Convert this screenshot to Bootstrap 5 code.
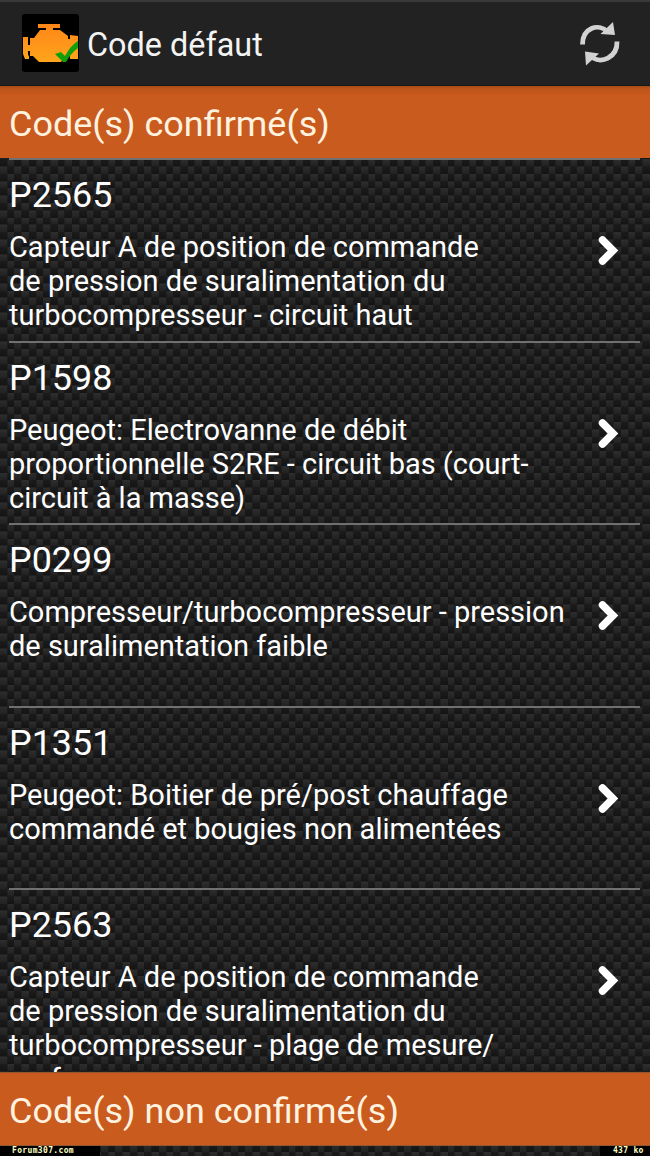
<!DOCTYPE html>
<html lang="fr" data-bs-theme="dark">
<head>
<meta charset="utf-8">
<meta name="viewport" content="width=device-width, initial-scale=1">
<title>Code défaut</title>
<link href="https://cdn.jsdelivr.net/npm/bootstrap@5.3.0/dist/css/bootstrap.min.css" rel="stylesheet">
<style>
  body { font-family: Roboto, sans-serif; color: #fff; background: #191919; }
  .screen { height: 1156px; }
  .topbar { height: 86px; background: #222; border-top: 2px solid #393939; border-bottom: 1px solid #161616; padding: 0 30px 0 22px; }
  .topbar h1 { font-size: 32.4px; line-height: 40px; color: #f3f3f3; padding-top: 2px; }
  .engine-logo { margin-bottom: 2px; }
  .section-title { height: 72px; flex: none; background: #ca5b1e; color: #fff3e0; font-size: 35.96px; line-height: 77px; padding-left: 9px; }
  .section-first { background: linear-gradient(#a94c18, #bd551b 3px, #ca5b1e 10px); }
  .carbon { background-image: url("data:image/svg+xml,%3Csvg xmlns='http://www.w3.org/2000/svg' width='14.444' height='14.6' viewBox='0 0 14 14' preserveAspectRatio='none'%3E%3Cdefs%3E%3ClinearGradient id='a' x2='0' y2='1'%3E%3Cstop stop-color='%232e2e2e'/%3E%3Cstop offset='1' stop-color='%23212121'/%3E%3C/linearGradient%3E%3ClinearGradient id='b' x2='0' y2='1'%3E%3Cstop stop-color='%231b1b1b'/%3E%3Cstop offset='1' stop-color='%23141414'/%3E%3C/linearGradient%3E%3C/defs%3E%3Cpath fill='url(%23b)' d='M0 0h7v7H0z'/%3E%3Cpath fill='url(%23a)' d='M7 0h7v7H7z'/%3E%3Cpath fill='url(%23a)' d='M0 7h7v7H0z'/%3E%3Cpath fill='url(%23b)' d='M7 7h7v7H7z'/%3E%3C/svg%3E"); background-size: 14.444px 14.6px; background-position: 0 13.3px; }
  .codes { height: 914px; flex: none; padding: 0 10px 0 9px; }
  .code-item { height: 182.5px; border-top: 2px solid #707070; padding-top: 14px; }
  .code-item h2 { font-size: 35.9px; line-height: 43px; margin: 0 0 13px; }
  .code-item p { font-size: 28.99px; line-height: 34px; margin: 0; white-space: nowrap; }
  .code-item svg { margin: 61px 21px 0 0; flex: none; }
  .foot-title { border-top: 1px solid #94562f; border-bottom: 1px solid #94562f; height: 74px; line-height: 76px; }
  .stamp { background: #000; color: #ffffc4; font: bold 8px/10px "DejaVu Sans Mono", monospace; height: 10px; }
  .stamp-left { width: 100px; padding-left: 12px; letter-spacing: .35px; }
  .stamp-right { width: 50px; padding-left: 13px; letter-spacing: .3px; }
</style>
</head>
<body>
<div class="screen d-flex flex-column overflow-hidden carbon">
  <header class="topbar d-flex align-items-center flex-shrink-0">
    <svg width="57" height="58" viewBox="0 0 57 58" class="engine-logo me-2" aria-hidden="true">
      <defs><linearGradient id="engine" x2="0" y2="1"><stop stop-color="#ff8618"/><stop offset="1" stop-color="#ffa51b"/></linearGradient></defs>
      <rect width="57" height="58" rx="3" fill="#000"/>
      <path fill="url(#engine)" d="M16 10h22v4h-7v2h7l8 6v3h2v-4l8 1v23h-8v-4h-3l-6 7H17l-6-6H8v-5H6v4l1 1v3H3L1 40V23h5v8h2v-7h4l6-8h6v-2h-8z"/>
      <path fill="#109f08" d="M33 40l6-2 4 4q6-11 13-15v7q-7 5-12 14h-3z"/>
    </svg>
    <h1 class="mb-0 me-auto fw-normal">Code défaut</h1>
    <svg width="40" height="44" viewBox="0 0 40 44" aria-label="Actualiser">
      <path d="M2.500 22.500C2.500 6 18 .5 28 10M37 19.500C37.500 35 21 43.500 10.500 34" fill="none" stroke="#d2d2d2" stroke-width="4.800"/>
      <path fill="#d2d2d2" d="M33 0l2 13-14.500-1zM5 29.500l14 2L6 43.500z"/>
    </svg>
  </header>
  <div class="section-title section-first">Code(s) confirmé(s)</div>
  <main class="codes overflow-hidden">
    <section class="code-item d-flex">
      <div class="me-auto"><h2 class="fw-normal">P2565</h2><p>Capteur A de position de commande<br>de pression de suralimentation du<br>turbocompresseur - circuit haut</p></div>
      <svg width="22" height="32" viewBox="0 0 22 32"><path d="M5.500 5l10.500 10.500L5.500 26" fill="none" stroke="#fff" stroke-width="7.500" stroke-linecap="round"/></svg>
    </section>
    <section class="code-item d-flex">
      <div class="me-auto"><h2 class="fw-normal">P1598</h2><p>Peugeot: Electrovanne de débit<br>proportionnelle S2RE - circuit bas (court-<br>circuit à la masse)</p></div>
      <svg width="22" height="32" viewBox="0 0 22 32"><path d="M5.500 5l10.500 10.500L5.500 26" fill="none" stroke="#fff" stroke-width="7.500" stroke-linecap="round"/></svg>
    </section>
    <section class="code-item d-flex">
      <div class="me-auto"><h2 class="fw-normal">P0299</h2><p>Compresseur/turbocompresseur - pression<br>de suralimentation faible</p></div>
      <svg width="22" height="32" viewBox="0 0 22 32"><path d="M5.500 5l10.500 10.500L5.500 26" fill="none" stroke="#fff" stroke-width="7.500" stroke-linecap="round"/></svg>
    </section>
    <section class="code-item d-flex">
      <div class="me-auto"><h2 class="fw-normal">P1351</h2><p>Peugeot: Boitier de pré/post chauffage<br>commandé et bougies non alimentées</p></div>
      <svg width="22" height="32" viewBox="0 0 22 32"><path d="M5.500 5l10.500 10.500L5.500 26" fill="none" stroke="#fff" stroke-width="7.500" stroke-linecap="round"/></svg>
    </section>
    <section class="code-item d-flex">
      <div class="me-auto"><h2 class="fw-normal">P2563</h2><p>Capteur A de position de commande<br>de pression de suralimentation du<br>turbocompresseur - plage de mesure/<br>performance</p></div>
      <svg width="22" height="32" viewBox="0 0 22 32"><path d="M5.500 5l10.500 10.500L5.500 26" fill="none" stroke="#fff" stroke-width="7.500" stroke-linecap="round"/></svg>
    </section>
  </main>
  <div class="section-title foot-title">Code(s) non confirmé(s)</div>
  <footer class="d-flex justify-content-between">
    <span class="stamp stamp-left">Forum307.com</span>
    <span class="stamp stamp-right">437 ko</span>
  </footer>
</div>
<script src="https://cdn.jsdelivr.net/npm/bootstrap@5.3.0/dist/js/bootstrap.bundle.min.js"></script>
</body>
</html>
